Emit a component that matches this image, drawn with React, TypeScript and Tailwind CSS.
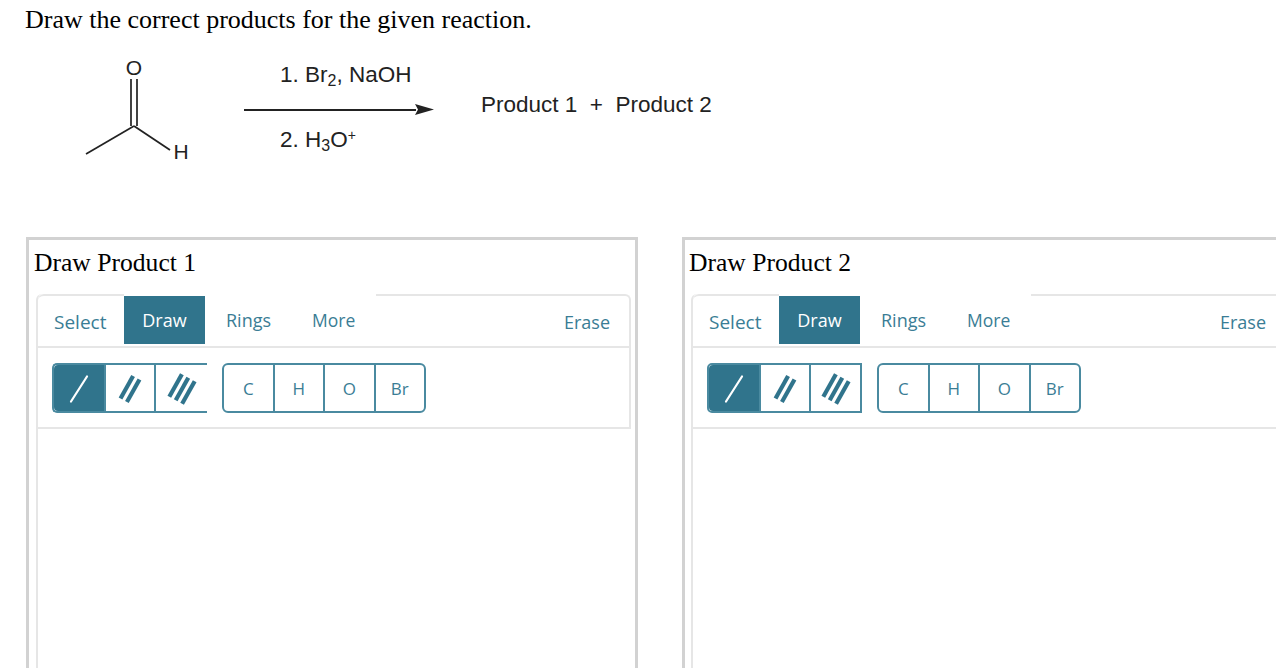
import React from 'react';

const TEAL = '#30748c';

const Bond: React.FC<{ count: number; active?: boolean }> = ({ count, active }) => {
  const offsets = count === 1 ? [0] : count === 2 ? [-1, 1] : [-2, 0, 2];
  const half = active ? { x: 8, y: 12.5 } : { x: 6.3, y: 11.2 };
  return (
    <svg width="30" height="34" viewBox="0 0 30 34" fill="none" aria-hidden="true">
      {offsets.map((o) => (
        <line
          key={o}
          x1={15 - half.x + o * 3.2}
          y1={18 + half.y + o * 1.75}
          x2={15 + half.x + o * 3.2}
          y2={18 - half.y + o * 1.75}
          stroke={active ? '#ffffff' : TEAL}
          strokeWidth={active ? 2.2 : 4.2}
          strokeLinecap={active ? 'round' : 'butt'}
        />
      ))}
    </svg>
  );
};

const Toolbar: React.FC<{ closed?: boolean }> = ({ closed }) => (
  <div className="flex items-center h-[81px] pl-[14px] border-b-2 border-[#e6e6e6]">
    <div
      className={
        closed
          ? 'flex h-[50px] w-[155px] border-2 border-[#4a8aa0] rounded-l-[5px]'
          : 'flex h-[50px] w-[155px] border-2 border-r-0 border-[#4a8aa0] rounded-l-[5px]'
      }
    >
      <div className="w-[50px] flex items-center justify-center bg-[#30748c] rounded-l-[4px]">
        <Bond count={1} active />
      </div>
      <div className="w-[52px] flex items-center justify-center border-x-2 border-[#4a8aa0]">
        <Bond count={2} />
      </div>
      <div className="flex-1 flex items-center justify-center">
        <Bond count={3} />
      </div>
    </div>
    <div className="flex h-[50px] w-[204px] ml-[15px] border-2 border-[#4a8aa0] rounded-[6px] text-[17px] font-medium text-[#3a7d95] font-['Open_Sans',sans-serif]">
      {['C', 'H', 'O', 'Br'].map((a, i) => (
        <div
          key={a}
          className={
            i < 3
              ? 'flex-1 flex items-center justify-center pt-[2px] border-r-2 border-[#4a8aa0]'
              : 'flex-1 flex items-center justify-center pt-[2px]'
          }
        >
          {a}
        </div>
      ))}
    </div>
  </div>
);

const Panel: React.FC<{ title: string; second?: boolean }> = ({ title, second }) => (
  <div
    className={
      second
        ? 'w-[612px] shrink-0 h-[431px] border-[3px] border-b-0 border-[#d2d2d2] pl-[6px] pr-[4px]'
        : 'w-[612px] shrink-0 h-[431px] border-[3px] border-b-0 border-[#d2d2d2] pl-[7px] pr-[4px]'
    }
  >
    <h2 className="font-['Liberation_Serif',serif] text-[25.6px] leading-[46px] h-[54px] font-normal text-black -ml-[2px]">{title}</h2>
    <div className="h-full border-l-2 border-[#e6e6e6] rounded-tl-[6px]">
      <div className="flex h-[54px] border-b-2 border-[#e6e6e6] font-['Open_Sans',sans-serif] text-[18px] text-[#3a7d95]">
        <div className="w-[86px] flex items-center pl-[16px] pt-[2px] border-t-2 border-[#e6e6e6] rounded-tl-[6px] text-[19px]">Select</div>
        <div className="w-[81px] h-[48px] mt-[2px] flex items-center justify-center bg-[#30748c] text-white font-medium">Draw</div>
        <div className="w-[86px] h-[52px] flex items-center pl-[21px]">Rings</div>
        <div className="w-[85px] h-[52px] flex items-center pl-[21px] text-[17.5px]">More</div>
        <div className="flex-1 flex items-center justify-end pr-[19px] pt-[2px] border-t-2 border-r-2 border-[#e6e6e6] rounded-tr-[6px]">Erase</div>
      </div>
      <div className="border-r-2 border-[#e6e6e6]">
        <Toolbar closed={second} />
      </div>
    </div>
  </div>
);

const Molecule: React.FC = () => (
  <svg width="110" height="112" viewBox="0 0 110 112" className="shrink-0 font-['Liberation_Sans',sans-serif]">
    <text x="55" y="18" fontSize="21" textAnchor="middle" fill="#222">O</text>
    <line x1="52" y1="22" x2="52" y2="69" stroke="#222" strokeWidth="1.7" />
    <line x1="58" y1="22" x2="58" y2="69" stroke="#222" strokeWidth="1.7" />
    <line x1="55" y1="69" x2="7" y2="97" stroke="#222" strokeWidth="1.7" />
    <line x1="55" y1="69" x2="91" y2="93" stroke="#222" strokeWidth="1.7" />
    <text x="102" y="102" fontSize="21" textAnchor="middle" fill="#222">H</text>
  </svg>
);

export default function App() {
  return (
    <div className="h-[668px] w-[1276px] overflow-hidden bg-white">
      <h1 className="font-['Liberation_Serif',serif] text-[26px] leading-[40px] font-normal text-black pl-[25px]">
        Draw the correct products for the given reaction.
      </h1>
      <div className="flex h-[197px] items-start pl-[79px] pt-[17px] font-['Liberation_Sans',sans-serif] text-[22.5px] text-[#222]">
        <Molecule />
        <div className="ml-[55px] w-[190px] shrink-0 relative">
          <div className="h-[36px] pl-[36px] leading-[36px] whitespace-nowrap">
            1. Br<sub className="text-[16px]">2</sub>, NaOH
          </div>
          <div className="mt-[11px] flex items-center">
            <div className="h-[2px] flex-1 bg-[#222]" />
            <svg width="19" height="11" viewBox="0 0 19 11" className="-ml-[1px]">
              <path d="M0 0 L19 5.5 L0 11 L3 5.5 Z" fill="#222" />
            </svg>
          </div>
          <div className="mt-[7px] pl-[36px] leading-[36px] whitespace-nowrap">
            2. H<sub className="text-[16px]">3</sub>O<sup className="text-[14px]">+</sup>
          </div>
        </div>
        <div className="ml-[47px] mt-[34px] leading-[28px] whitespace-pre">Product 1  +  Product 2</div>
      </div>
      <div className="flex gap-[44px] pl-[26px]">
        <Panel title="Draw Product 1" />
        <Panel title="Draw Product 2" second />
      </div>
    </div>
  );
}
